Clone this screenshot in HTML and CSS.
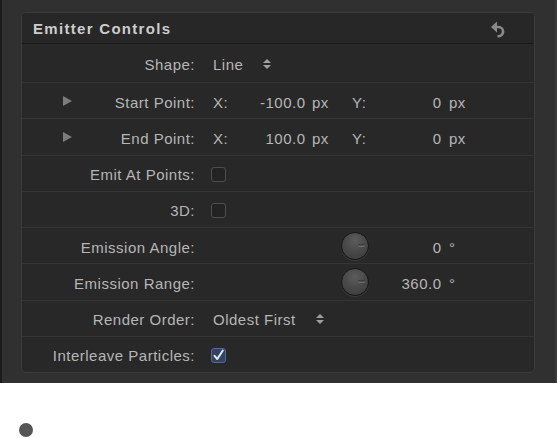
FILE: index.html
```html
<!DOCTYPE html>
<html>
<head>
<meta charset="utf-8">
<link rel="stylesheet" href="styles.css">
</head>
<body>
<div class="frame">
  <div class="panel">
    <div class="header">
      <span class="title">Emitter Controls</span>
      <svg class="undo" width="14" height="17" viewBox="0 0 14 17">
        <polygon points="0,6 6,0.5 6,11.5" fill="#8a8a8a"/>
        <path d="M5 6 H7.5 A4.6 4.6 0 0 1 7.5 15.2 H6.5" fill="none" stroke="#8a8a8a" stroke-width="2.6"/>
      </svg>
    </div>
    <div class="row first">
      <div class="label"><span class="text">Shape:</span></div>
      <div class="value"><span>Line</span><span class="stepper"><i class="up"></i><i class="down"></i></span></div>
    </div>
    <div class="row">
      <div class="label"><span class="tri"></span><span class="text">Start Point:</span></div>
      <div class="value">
        <span class="axis">X:</span><span class="num n1">-100.0</span><span class="unit u1">px</span>
        <span class="axis a2">Y:</span><span class="num n2">0</span><span class="unit u2">px</span>
      </div>
    </div>
    <div class="row">
      <div class="label"><span class="tri"></span><span class="text">End Point:</span></div>
      <div class="value">
        <span class="axis">X:</span><span class="num n1">100.0</span><span class="unit u1">px</span>
        <span class="axis a2">Y:</span><span class="num n2">0</span><span class="unit u2">px</span>
      </div>
    </div>
    <div class="row">
      <div class="label"><span class="text">Emit At Points:</span></div>
      <div class="value"><span class="check"></span></div>
    </div>
    <div class="row">
      <div class="label"><span class="text">3D:</span></div>
      <div class="value"><span class="check"></span></div>
    </div>
    <div class="row">
      <div class="label"><span class="text">Emission Angle:</span></div>
      <div class="value"><span class="spacer"></span><span class="dial"><i class="notch"></i></span><span class="num n3">0</span><span class="unit u2">°</span></div>
    </div>
    <div class="row">
      <div class="label"><span class="text">Emission Range:</span></div>
      <div class="value"><span class="spacer"></span><span class="dial"><i class="notch"></i></span><span class="num n3">360.0</span><span class="unit u2">°</span></div>
    </div>
    <div class="row">
      <div class="label"><span class="text">Render Order:</span></div>
      <div class="value"><span>Oldest First</span><span class="stepper"><i class="up"></i><i class="down"></i></span></div>
    </div>
    <div class="row last">
      <div class="label"><span class="text">Interleave Particles:</span></div>
      <div class="value"><span class="check checked">
        <svg width="15" height="15" viewBox="0 0 15 15"><path d="M3.5 7.8 L6.3 11 L11.8 2.5" fill="none" stroke="#dde8f7" stroke-width="2" stroke-linecap="round" stroke-linejoin="round"/></svg>
      </span></div>
    </div>
  </div>
</div>
<div class="below"><span class="bullet"></span></div>
</body>
</html>
```
FILE: styles.css
```css
html, body {
  margin: 0;
  padding: 0;
  background: #ffffff;
}
body {
  width: 557px;
  height: 438px;
  overflow: hidden;
  font-family: "Liberation Sans", Arial, sans-serif;
}
.frame {
  box-sizing: border-box;
  width: 557px;
  height: 383px;
  background: #303030;
  border-left: 2px solid #1b1b1b;
  border-right: 2px solid #3a3a3a;
  padding: 12px 0 0 19px;
}
.panel {
  box-sizing: border-box;
  width: 514px;
  height: 361px;
  background: #282828;
  border: 1px solid #3b3b3b;
  border-radius: 5px;
  display: flex;
  flex-direction: column;
}
.header {
  flex: 0 0 auto;
  height: 31px;
  box-sizing: border-box;
  border-bottom: 1px solid #1c1c1c;
  display: flex;
  align-items: center;
  padding: 0 29px 0 11px;
  background: #272727;
  border-radius: 4px 4px 0 0;
}
.title {
  font-weight: bold;
  font-size: 15px;
  letter-spacing: 1.3px;
  color: #cdcdcd;
  flex: 1;
  padding-top: 1px;
}
.undo {
  display: block;
  margin-top: 2px;
}
.row {
  flex: 1 1 0;
  display: flex;
  align-items: center;
  border-bottom: 1px solid #343434;
  font-size: 15px;
  letter-spacing: 0.5px;
  color: #b6b6b6;
}
.row.first {
  flex: 0 0 38px;
}
.row.last {
  border-bottom: none;
}
.label {
  width: 173px;
  display: flex;
  align-items: center;
  flex: 0 0 auto;
}
.label .text {
  margin-left: auto;
  white-space: nowrap;
  padding-top: 3px;
}
.tri {
  margin-left: 41px;
  width: 0;
  height: 0;
  border-top: 5px solid transparent;
  border-bottom: 5px solid transparent;
  border-left: 9px solid #7c7c7c;
}
.value {
  margin-left: 18px;
  display: flex;
  align-items: center;
  white-space: nowrap;
}
.value > span {
  padding-top: 3px;
}
.axis { width: 28px; }
.axis.a2 { width: 40px; }
.num { text-align: right; }
.n1 { width: 64.5px; }
.n2 { width: 49.5px; }
.n3 { width: 72.5px; }
.unit.u1 { width: 40px; margin-left: 6.5px; }
.unit.u2 { margin-left: 7.5px; }
.spacer { width: 128px; }
.value > span.stepper {
  display: flex;
  flex-direction: column;
  align-items: center;
  gap: 2px;
  margin-left: 20px;
  padding-top: 1px;
}
.stepper i {
  display: block;
  width: 0;
  height: 0;
  border-left: 4px solid transparent;
  border-right: 4px solid transparent;
}
.stepper .up { border-bottom: 4px solid #a0a0a0; }
.stepper .down { border-top: 4px solid #a0a0a0; }
.value > span.check {
  box-sizing: border-box;
  width: 15px;
  height: 15px;
  margin-left: -2px;
  margin-top: 2px;
  border: 1px solid #4e4e4e;
  border-radius: 3px;
  background: #232323;
  display: block;
  position: relative;
  padding-top: 0;
}
.value > span.check.checked {
  background: #334260;
  border-color: #56698f;
}
.check svg {
  display: block;
  position: absolute;
  left: -1px;
  top: -1px;
}
.value > span.dial {
  box-sizing: border-box;
  width: 28px;
  height: 28px;
  border-radius: 50%;
  background: radial-gradient(circle at 50% 30%, #5c5c5c 0%, #4a4a4a 45%, #393939 100%);
  border: 1px solid #181818;
  box-shadow: 0 1px 0 #3a3a3a;
  position: relative;
  padding-top: 0;
  display: block;
  margin-top: 1px;
}
.notch {
  position: absolute;
  left: 16px;
  top: 11px;
  width: 7px;
  height: 3px;
  border-radius: 1.5px;
  background: linear-gradient(#2e2e2e, #777777);
}
.below {
  height: 55px;
  position: relative;
}
.bullet {
  position: absolute;
  left: 19px;
  top: 40px;
  width: 14px;
  height: 14px;
  border-radius: 50%;
  background: #555555;
}
```
